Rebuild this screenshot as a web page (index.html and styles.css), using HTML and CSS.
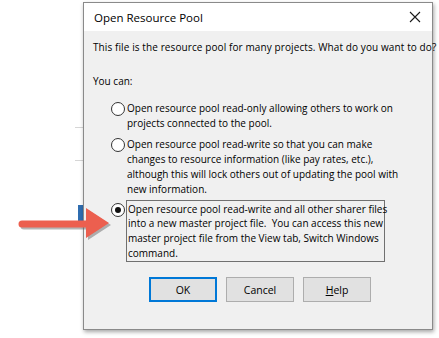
FILE: index.html
```html
<!DOCTYPE html>
<html lang="en">
<head>
  <meta charset="UTF-8">
  <title>Open Resource Pool</title>
  <link rel="stylesheet" href="styles.css">
</head>
<body>
  <div class="dialog">
    <div class="title-bar">
      <span class="title">Open Resource Pool</span>
      <svg class="close" width="12" height="12" viewBox="0 0 12 12">
        <path d="M1 1 L11 11 M11 1 L1 11" stroke="#1a1a1a" stroke-width="1.1" fill="none"/>
      </svg>
    </div>
    <div class="content">
      <p class="intro">This file is the resource pool for many projects. What do you want to do?</p>
      <p class="lead">You can:</p>
      <div class="options">
        <div class="option">
          <span class="radio"></span>
          <span class="label">Open resource pool read-only allowing others to work on<br>projects connected to the pool.</span>
        </div>
        <div class="option">
          <span class="radio"></span>
          <span class="label">Open resource pool read-write so that you can make<br>changes to resource information (like pay rates, etc.),<br>although this will lock others out of updating the pool with<br>new information.</span>
        </div>
        <div class="option selected">
          <span class="radio"></span>
          <span class="label focus">Open resource pool read-write and all other sharer files<br>into a new master project file.&nbsp; You can access this new<br>master project file from the View tab, Switch Windows<br>command.</span>
        </div>
      </div>
      <div class="buttons">
        <button class="default">OK</button>
        <button>Cancel</button>
        <button><u>H</u>elp</button>
      </div>
    </div>
  </div>

  <svg class="arrow" width="100" height="40" viewBox="0 0 100 40">
    <g transform="translate(2,2)" fill="#5a5a5a" opacity="0.45">
      <path d="M6 16.5 H70 V4 L93 19 L70 34 V23.5 H6 A3.5 3.5 0 0 1 6 16.5 Z"/>
    </g>
    <path d="M6 16.5 H70 V4 L93 19 L70 34 V23.5 H6 A3.5 3.5 0 0 1 6 16.5 Z" fill="#ec5f4f"/>
  </svg>
</body>
</html>
```

FILE: styles.css
```css
body {
  margin: 0;
  width: 439px;
  height: 338px;
  overflow: hidden;
  position: relative;
  background-color: #ffffff;
  background-image:
    linear-gradient(#d6d6d6, #d6d6d6),
    linear-gradient(#d6d6d6, #d6d6d6),
    linear-gradient(#2f6db0, #2f6db0);
  background-size: 8px 1px, 8px 1px, 5px 17px;
  background-position: 75px 127px, 75px 160px, 78px 205px;
  background-repeat: no-repeat;
  font-family: "Open Sans", "Noto Sans", sans-serif;
  color: #000;
  padding: 2px 0 0 83px;
  box-sizing: border-box;
}
.dialog {
  width: 350px;
  height: 328px;
  box-sizing: border-box;
  border: 1px solid #8a8a8a;
  background-color: #f0f0f0;
  box-shadow: 1px 2px 4px rgba(0, 0, 0, 0.35);
  display: flex;
  flex-direction: column;
}
.title-bar {
  height: 28px;
  background-color: #ffffff;
  display: flex;
  align-items: center;
  justify-content: space-between;
  padding: 0 10px 0 10px;
}
.title {
  font-size: 11.5px;
}
.close {
  margin-right: 1px;
}
.content {
  padding: 9px 0 0 9px;
  font-size: 10px;
}
.intro {
  margin: 0;
  line-height: 15px;
  white-space: nowrap;
  letter-spacing: 0.1px;
}
.lead {
  margin: 19px 0 0 0;
  line-height: 15px;
}
.options {
  margin: 12px 0 0 18px;
  display: flex;
  flex-direction: column;
}
.option {
  display: flex;
  align-items: flex-start;
  line-height: 14.7px;
  margin-bottom: 7px;
  white-space: nowrap;
}
.option.selected {
  margin-top: -1px;
}
.radio {
  width: 12px;
  height: 12px;
  border: 1px solid #333;
  border-radius: 50%;
  background-color: #fff;
  margin-top: 0.5px;
  margin-right: 2px;
  flex: none;
  display: flex;
  align-items: center;
  justify-content: center;
}
.selected .radio::after {
  content: "";
  width: 6px;
  height: 6px;
  border-radius: 50%;
  background-color: #111;
}
.label.focus {
  border: 1px solid #707070;
  padding: 0.5px 0 0.5px 1px;
  width: 256px;
  margin-top: -2px;
  margin-left: -1px;
}
.buttons {
  display: flex;
  gap: 9px;
  margin: 8px 0 0 56px;
}
.buttons button {
  width: 68px;
  height: 25px;
  background-color: #e1e1e1;
  border: 1px solid #adadad;
  font-family: inherit;
  font-size: 10.5px;
  color: #000;
  padding: 0;
}
.buttons button.default {
  border-color: #0078d7;
  box-shadow: inset 0 0 0 1px #0078d7;
}
.arrow {
  position: absolute;
  left: 16px;
  top: 204px;
}
```
